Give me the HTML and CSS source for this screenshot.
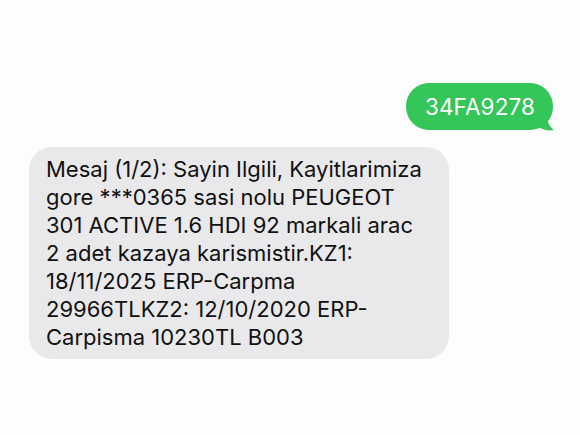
FILE: index.html
```html
<!DOCTYPE html>
<html lang="tr">
<head>
<meta charset="utf-8">
<title>Mesajlar</title>
<link rel="stylesheet" href="styles.css">
</head>
<body>
<main class="thread">
  <div class="bubble bubble-sent">
    <span class="bubble-text">34FA9278</span>
    <svg class="tail" width="22" height="20" viewBox="0 0 22 20">
      <path d="M0 0 L8 0 C8 8 11 14 16 18 C10 19 5 18 1 15 Z" fill="#35c659"/>
    </svg>
  </div>
  <div class="bubble bubble-received">
    <p class="bubble-text">Mesaj (1/2): Sayin Ilgili, Kayitlarimiza<br>gore ***0365 sasi nolu PEUGEOT<br>301 ACTIVE 1.6 HDI 92 markali arac<br>2 adet kazaya karismistir.KZ1:<br>18/11/2025 ERP-Carpma<br>29966TLKZ2: 12/10/2020 ERP-<br>Carpisma 10230TL B003</p>
  </div>
</main>
</body>
</html>
```

FILE: styles.css
```css
html, body {
  margin: 0;
  padding: 0;
  background: #fdfdfd;
}

body {
  font-family: Inter, "Liberation Sans", sans-serif;
  -webkit-font-smoothing: antialiased;
}

.thread {
  display: flex;
  flex-direction: column;
  padding: 83px 27px 0 29px;
  gap: 17px;
}

.bubble {
  position: relative;
  border-radius: 23px;
}

.bubble-sent {
  align-self: flex-end;
  background: #35c659;
  color: #fff;
  height: 47px;
  padding: 0 18px 0 19px;
  display: flex;
  align-items: center;
}

.bubble-sent .bubble-text {
  font-size: 22.5px;
  letter-spacing: 0.1px;
}

.tail {
  position: absolute;
  right: -7px;
  bottom: -2px;
}

.bubble-received {
  align-self: flex-start;
  width: 420px;
  box-sizing: border-box;
  background: #e9e9eb;
  color: #111;
  padding: 8px 17px 8px;
}

.bubble-received .bubble-text {
  margin: 0;
  font-size: 22px;
  line-height: 28px;
}
```
